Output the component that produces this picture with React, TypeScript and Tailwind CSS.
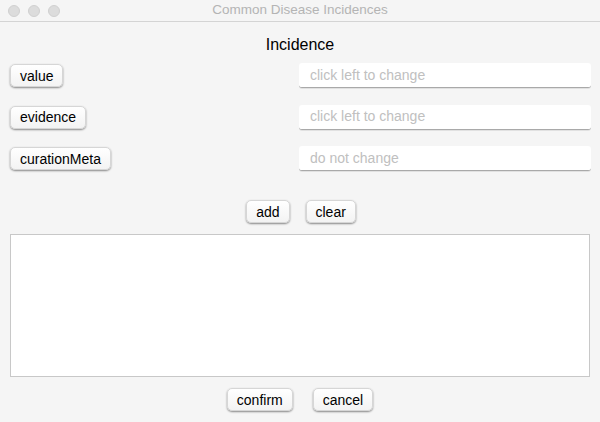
import React from "react";

const font = { fontFamily: '"Liberation Sans", Arial, sans-serif' };

function MacButton({ label, className = "" }: { label: string; className?: string }) {
    return (
        <button
            className={`h-[23px] px-[9px] rounded-[5px] bg-gradient-to-b from-white to-[#f3f3f3] border border-[#d6d6d6] shadow-[0_1px_2px_rgba(0,0,0,0.45)] text-[14px] leading-none text-black ${className}`}
        >
            {label}
        </button>
    );
}

function Field({ placeholder }: { placeholder: string }) {
    return (
        <div className="w-[292px] h-[25px] bg-white rounded-[3px] border-b border-[#a9a9a9] shadow-[0_1px_0_rgba(0,0,0,0.08)] flex items-center px-[11px] text-[14px] text-[#c0c0c0]">
            {placeholder}
        </div>
    );
}

export default function App() {
    const rows = [
        { label: "value", placeholder: "click left to change" },
        { label: "evidence", placeholder: "click left to change" },
        { label: "curationMeta", placeholder: "do not change" },
    ];

    return (
        <div className="w-[600px] h-[422px] bg-[#f5f5f5] overflow-hidden flex flex-col" style={font}>
            {/* window title bar */}
            <div className="relative h-[22px] border-b border-[#d4d4d4] flex items-center justify-center">
                <div className="absolute left-[8px] top-[5px] flex gap-[8px]">
                    <span className="w-[12px] h-[12px] rounded-full bg-[#dcdcdc] border border-[#d0d0d0]" />
                    <span className="w-[12px] h-[12px] rounded-full bg-[#dcdcdc] border border-[#d0d0d0]" />
                    <span className="w-[12px] h-[12px] rounded-full bg-[#dcdcdc] border border-[#d0d0d0]" />
                </div>
                <span className="text-[13.5px] text-[#b4b4b4]">Common Disease Incidences</span>
            </div>

            <div className="px-[10px] flex flex-col">
                <h1 className="mt-[14px] h-[18px] text-center text-[16px] leading-[18px] text-black">Incidence</h1>

                <div className="mt-[9px] flex flex-col gap-[16.5px]">
                    {rows.map((r) => (
                        <div key={r.label} className="h-[25px] flex items-center justify-between">
                            <MacButton label={r.label} />
                            <div className="mr-[-1px]">
                                <Field placeholder={r.placeholder} />
                            </div>
                        </div>
                    ))}
                </div>

                <div className="mt-[28px] h-[25px] flex items-center justify-center gap-[16px] pl-[2px]">
                    <MacButton label="add" />
                    <MacButton label="clear" />
                </div>

                <div className="mt-[10px] h-[143px] bg-white border border-[#c8c8c8]" />

                <div className="mt-[10px] h-[25px] flex items-center justify-center gap-[20px]">
                    <MacButton label="confirm" />
                    <MacButton label="cancel" />
                </div>
            </div>
        </div>
    );
}
